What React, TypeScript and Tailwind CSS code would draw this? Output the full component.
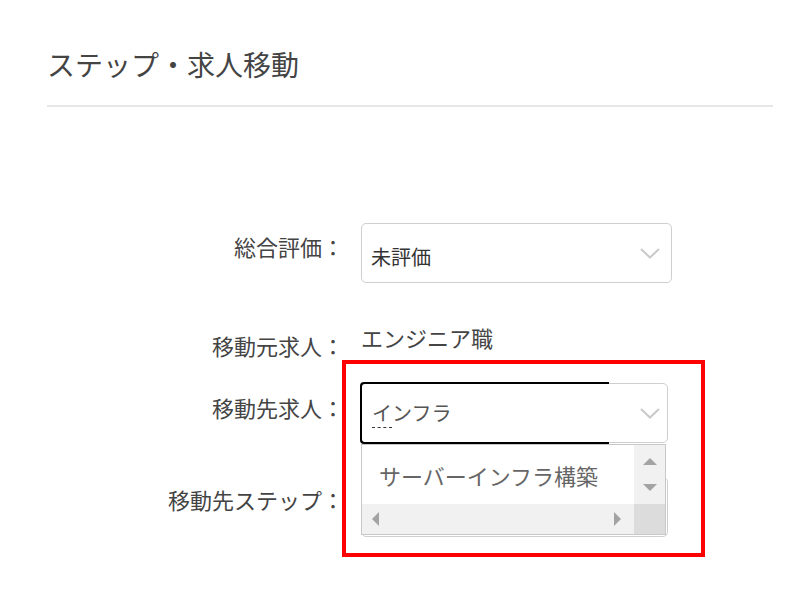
function Chevron() {
  return (
    <svg width="20" height="11" viewBox="0 0 20 11" className="shrink-0">
      <path d="M1 1 L10 9.5 L19 1" fill="none" stroke="#c9c9c9" strokeWidth="2" />
    </svg>
  );
}

function Tri({ dir }: { dir: "up" | "down" | "left" | "right" }) {
  const pts = {
    up: "0,7 7,0 14,7",
    down: "0,0 14,0 7,7",
    left: "7,0 7,14 0,7",
    right: "0,0 0,14 7,7",
  }[dir];
  const vertical = dir === "up" || dir === "down";
  return (
    <svg width={vertical ? 14 : 7} height={vertical ? 7 : 14} viewBox={vertical ? "0 0 14 7" : "0 0 7 14"}>
      <polygon points={pts} fill="#a3a3a3" />
    </svg>
  );
}

export default function App() {
  return (
    <div className="relative w-[793px] h-[599px] bg-white pl-[47px] pr-[20px] text-[#444] font-['Noto_Sans_CJK_JP','Noto_Sans',sans-serif] overflow-hidden">
      {/* header */}
      <div className="pt-[44px] pb-[21px] border-b-2 border-[#e7e7e7]">
        <h1 className="text-[28px] leading-[40px] font-normal">ステップ・求人移動</h1>
      </div>

      <div className="mt-[116px] flex flex-col">
        {/* 総合評価 */}
        <div className="flex items-start">
          <div className="w-[297px] mt-[7px] text-right text-[22px] leading-[33px]">総合評価：</div>
          <div className="ml-[17px] w-[311px] h-[60px] border border-[#cfcfcf] rounded-[5px] flex items-center justify-between pl-[9px] pr-[11px] pt-[7px]">
            <span className="text-[20px] leading-[30px] text-[#333]">未評価</span>
            <span className="-mt-[7px]">
              <Chevron />
            </span>
          </div>
        </div>

        {/* 移動元求人 */}
        <div className="mt-[38px] flex items-start">
          <div className="w-[297px] mt-[8px] text-right text-[22px] leading-[33px]">移動元求人：</div>
          <div className="ml-[17px] text-[22px] leading-[33px]">エンジニア職</div>
        </div>

        {/* 移動先求人 */}
        <div className="mt-[21px] flex items-start relative z-10">
          <div className="w-[297px] mt-[8px] text-right text-[22px] leading-[33px]">移動先求人：</div>
          <div className="ml-[17px] relative w-[307px] h-[60px] border border-[#cfcfcf] rounded-[5px] flex items-center justify-between pl-[10px] pr-[7px]">
            <div className="absolute left-[-2px] top-[-2px] bottom-[-2px] w-[249px] border-2 border-r-0 border-black rounded-l-[4px]" />
            <span className="text-[20px] leading-[30px] text-[#555]">
              <span className="border-b border-dashed border-[#333]">イ</span>ンフラ
            </span>
            <Chevron />

            {/* open list */}
            <div className="absolute left-[-1px] top-[60px] w-[305px] h-[91px] bg-white border border-[#c8c8c8] flex flex-col">
              <div className="flex flex-1">
                <div className="flex-1 pl-[17px] pt-[1px] flex items-center text-[22px] leading-[30px] text-[#666]">
                  サーバーインフラ構築
                </div>
                <div className="w-[31px] bg-[#f1f1f1] flex flex-col items-center justify-center gap-[19px]">
                  <Tri dir="up" />
                  <Tri dir="down" />
                </div>
              </div>
              <div className="flex h-[30px]">
                <div className="flex-1 bg-[#f1f1f1] flex items-center justify-between pl-[10px] pr-[13px]">
                  <Tri dir="left" />
                  <Tri dir="right" />
                </div>
                <div className="w-[31px] bg-[#dcdcdc]" />
              </div>
            </div>
          </div>
        </div>

        {/* 移動先ステップ */}
        <div className="mt-[34px] flex items-start">
          <div className="w-[297px] mt-[6px] text-right text-[22px] leading-[33px]">移動先ステップ：</div>
          <div className="ml-[17px] w-[307px] h-[60px] border border-[#cfcfcf] rounded-[5px] flex items-center justify-end pr-[7px]">
            <Chevron />
          </div>
        </div>
      </div>

      {/* annotation frame */}
      <div className="absolute left-[342px] top-[360px] w-[363px] h-[197px] border-4 border-[#ff0000] pointer-events-none" />
    </div>
  );
}
